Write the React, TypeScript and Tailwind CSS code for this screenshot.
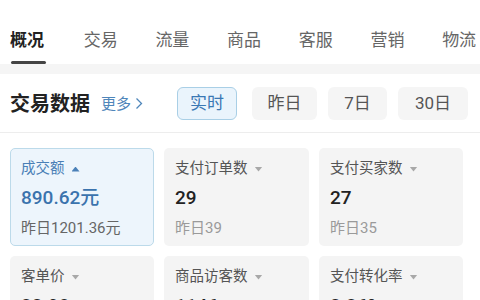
const tabs = ["概况", "交易", "流量", "商品", "客服", "营销", "物流"];

const ranges = [
  { label: "实时", w: "w-[60px]", ml: "ml-0", active: true },
  { label: "昨日", w: "w-[65px]", ml: "ml-[15px]", active: false },
  { label: "7日", w: "w-[59px]", ml: "ml-[11px]", active: false },
  { label: "30日", w: "w-[70px]", ml: "ml-[11px]", active: false },
];

interface Metric {
  label: string;
  value?: string;
  prev?: string;
  active?: boolean;
}

const metrics: Metric[] = [
  { label: "成交额", value: "890.62元", prev: "昨日1201.36元", active: true },
  { label: "支付订单数", value: "29", prev: "昨日39" },
  { label: "支付买家数", value: "27", prev: "昨日35" },
  { label: "客单价", value: "32.98", prev: "昨日30.79" },
  { label: "商品访客数", value: "1146", prev: "昨日1320" },
  { label: "支付转化率", value: "2.36%", prev: "昨日2.65%" },
];

function Caret({ up }: { up?: boolean }) {
  return (
    <span
      className={`ml-[7px] block h-[5px] w-[8px] shrink-0 ${
        up ? "bg-[#4a80b8] [clip-path:polygon(50%_0,100%_100%,0_100%)]" : "bg-[#a8a8a8] [clip-path:polygon(0_0,100%_0,50%_100%)]"
      }`}
    />
  );
}

function MetricCard({ m }: { m: Metric }) {
  return (
    <div
      className={
        m.active
          ? "h-[98px] rounded-[5px] border border-[#bcdaea] bg-[#edf5fc] pl-[10px] pt-[10px]"
          : "h-[98px] rounded-[5px] bg-[#f4f4f4] pl-[11px] pt-[11px]"
      }
    >
      <div className={`flex h-[20px] items-center text-[14.5px] leading-[20px] ${m.active ? "text-[#4a7fb6]" : "text-[#555]"}`}>
        <span className="whitespace-nowrap">{m.label}</span>
        <Caret up={m.active} />
      </div>
      <div
        className={`mt-[7px] h-[24px] text-[19px] leading-[24px] font-medium ${m.active ? "text-[#3b73ad]" : "text-[#222]"}`}
      >
        {m.value}
      </div>
      <div className={`mt-[8px] h-[20px] text-[15px] leading-[20px] ${m.active ? "text-[#666]" : "text-[#9a9a9a]"}`}>
        {m.prev}
      </div>
    </div>
  );
}

export default function App() {
  return (
    <div
      className="h-[300px] w-[480px] overflow-hidden bg-white"
      style={{ fontFamily: 'Roboto, "Noto Sans CJK SC", "Noto Sans", sans-serif' }}
    >
      <div className="flex h-[64px] gap-[37.7px] pl-[10px] pt-[29px] whitespace-nowrap">
        {tabs.map((t, i) => (
          <div key={t} className="flex flex-col items-start">
            <span className={`text-[17px] leading-[22px] ${i === 0 ? "font-bold text-[#222]" : "text-[#666]"}`}>
              {t}
            </span>
            {i === 0 && <span className="mt-[10px] ml-[1px] h-[3px] w-[35px] rounded-full bg-[#444]" />}
          </div>
        ))}
      </div>
      <div className="h-[10px] bg-[#f5f5f5]" />

      <div className="flex items-center border-b border-[#ededed] pt-[13px] pr-[12px] pb-[12px] pl-[10px]">
        <span className="text-[20px] leading-[24px] font-bold text-[#222]">交易数据</span>
        <span className="ml-[11px] flex items-center text-[15px] leading-[20px] text-[#4f86ba]">
          更多
          <svg width="8" height="13" viewBox="0 0 8 13" className="ml-[4px]">
            <path d="M1.5 1.5 L6.5 6.5 L1.5 11.5" fill="none" stroke="#4f86ba" strokeWidth="1.3" />
          </svg>
        </span>
        <div className="ml-auto flex">
          {ranges.map((r) => (
            <div
              key={r.label}
              className={`${r.w} ${r.ml} flex h-[33px] items-center justify-center rounded-[6px] text-[17px] ${
                r.active ? "border border-[#a9cfe6] bg-[#eaf4fc] text-[#3a78b4]" : "bg-[#f5f5f5] text-[#555]"
              }`}
            >
              {r.label}
            </div>
          ))}
        </div>
      </div>

      <div className="grid grid-cols-[144px_145px_144px] gap-[10px] pt-[15px] pl-[10px]">
        {metrics.map((m) => (
          <MetricCard key={m.label} m={m} />
        ))}
      </div>
    </div>
  );
}
